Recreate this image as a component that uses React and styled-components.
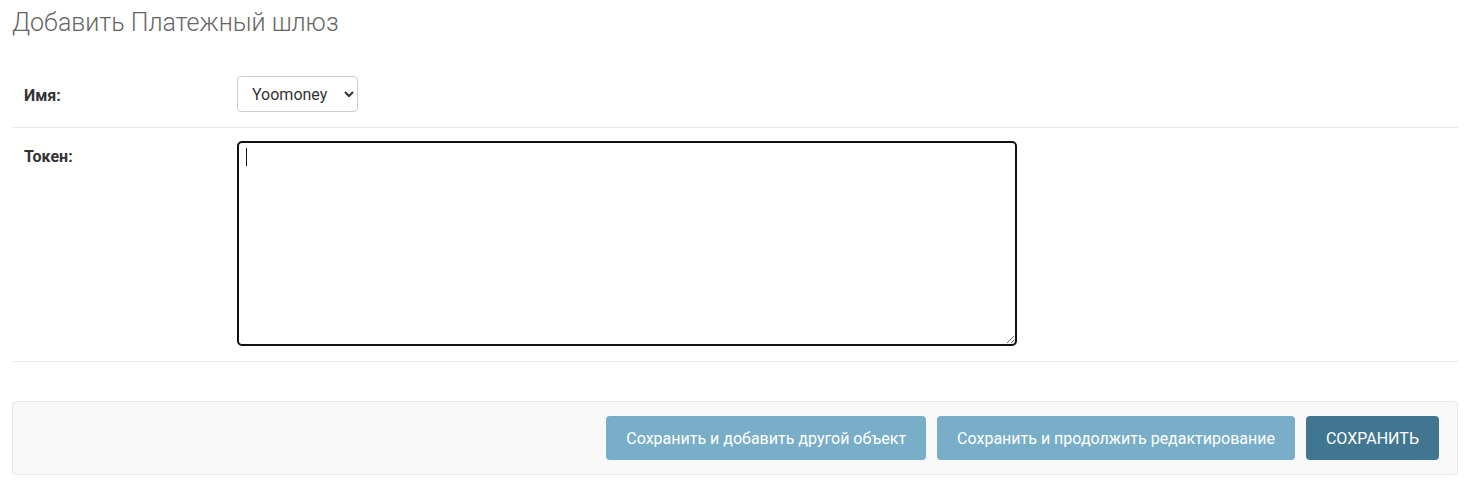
import React from "react";
import styled, { createGlobalStyle } from "styled-components";

const GlobalStyle = createGlobalStyle`
    html, body {
        margin: 0;
        padding: 0;
        background: #fff;
        font-family: Roboto, "Liberation Sans", sans-serif;
        color: #333;
    }
`;

const Page = styled.div`
    padding: 6px 13px 0 12px;
`;

const Title = styled.h1`
    margin: 0 0 36px;
    font-size: 25px;
    font-weight: 300;
    color: #666;
    line-height: 34px;
`;

const Row = styled.div`
    display: flex;
    align-items: flex-start;
    padding: ${(p) => p.$pad};
    border-bottom: 1px solid #e8e8e8;
`;

const Label = styled.label`
    width: 213px;
    flex: none;
    padding-left: 12px;
    padding-top: ${(p) => p.$top};
    font-size: 16px;
    font-weight: 700;
    color: #333;
`;

const Select = styled.select`
    height: 36px;
    width: 121px;
    padding: 0 6px 0 10px;
    border: 1px solid #ccc;
    border-radius: 4px;
    background: #fff;
    font-family: Roboto, "Liberation Sans", sans-serif;
    font-size: 16px;
    color: #333;
`;

const AreaWrap = styled.div`
    position: relative;
`;

const Area = styled.textarea`
    display: block;
    box-sizing: border-box;
    width: 780px;
    height: 205px;
    border: 2px solid #111;
    border-radius: 5px;
    outline: none;
    padding: 6px 8px;
    font-family: Roboto, "Liberation Sans", sans-serif;
    font-size: 14px;
`;

const Caret = styled.span`
    position: absolute;
    left: 9px;
    top: 7px;
    width: 1px;
    height: 18px;
    background: #111;
`;

const SubmitRow = styled.div`
    margin-top: 39px;
    display: flex;
    justify-content: flex-end;
    gap: 11px;
    padding: 14px 18px 14px 14px;
    background: #f8f8f8;
    border: 1px solid #e8e8e8;
    border-radius: 4px;
`;

const Button = styled.button`
    height: 44px;
    padding: 0 20px;
    border: none;
    border-radius: 4px;
    background: ${(p) => (p.$primary ? "#417690" : "#79aec8")};
    color: #fff;
    font-family: Roboto, "Liberation Sans", sans-serif;
    font-size: 16px;
    cursor: pointer;
`;

export default function App() {
    return (
        <Page>
            <GlobalStyle />
            <Title>Добавить Платежный шлюз</Title>
            <Row $pad="0 0 15px">
                <Label $top="10px">Имя:</Label>
                <Select defaultValue="yoomoney">
                    <option value="yoomoney">Yoomoney</option>
                </Select>
            </Row>
            <Row $pad="13px 0 15px">
                <Label $top="6px">Токен:</Label>
                <AreaWrap>
                    <Area />
                    <Caret />
                </AreaWrap>
            </Row>
            <SubmitRow>
                <Button>Сохранить и добавить другой объект</Button>
                <Button>Сохранить и продолжить редактирование</Button>
                <Button $primary>СОХРАНИТЬ</Button>
            </SubmitRow>
        </Page>
    );
}
